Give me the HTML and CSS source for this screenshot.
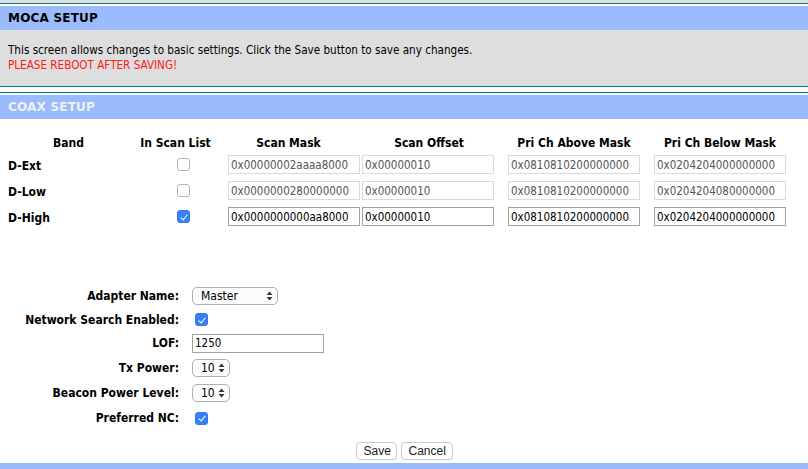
FILE: index.html
```html
<!DOCTYPE html>
<html>
<head>
<meta charset="utf-8">
<title>MoCA Setup</title>
<link rel="stylesheet" href="styles.css">
</head>
<body>
<div class="prev-strip"></div>
<section class="moca">
  <h2 class="bar">MOCA SETUP</h2>
  <div class="info">
    <p>This screen allows changes to basic settings. Click the Save button to save any changes.</p>
    <p class="warn">PLEASE REBOOT AFTER SAVING!</p>
  </div>
</section>
<section class="coax">
  <h2 class="bar bar-light">COAX SETUP</h2>
  <div class="bandgrid">
    <div class="hd">Band</div>
    <div class="hd hd-scan">In Scan List</div>
    <div class="hd hd-mask">Scan Mask</div>
    <div class="hd hd-off">Scan Offset</div>
    <div class="hd">Pri Ch Above Mask</div>
    <div class="hd">Pri Ch Below Mask</div>

    <div class="band">D-Ext</div>
    <div class="cbcell"><input type="checkbox" class="cb" disabled></div>
    <div class="c-mask"><input class="txt" type="text" value="0x00000002aaaa8000" disabled></div>
    <div class="c-off"><input class="txt" type="text" value="0x00000010" disabled></div>
    <div class="c-pri"><input class="txt" type="text" value="0x0810810200000000" disabled></div>
    <div class="c-pri"><input class="txt" type="text" value="0x0204204000000000" disabled></div>

    <div class="band">D-Low</div>
    <div class="cbcell"><input type="checkbox" class="cb" disabled></div>
    <div class="c-mask"><input class="txt" type="text" value="0x0000000280000000" disabled></div>
    <div class="c-off"><input class="txt" type="text" value="0x00000010" disabled></div>
    <div class="c-pri"><input class="txt" type="text" value="0x0810810200000000" disabled></div>
    <div class="c-pri"><input class="txt" type="text" value="0x0204204080000000" disabled></div>

    <div class="band">D-High</div>
    <div class="cbcell"><input type="checkbox" class="cb" checked></div>
    <div class="c-mask"><input class="txt txt-on" type="text" value="0x0000000000aa8000"></div>
    <div class="c-off"><input class="txt txt-on" type="text" value="0x00000010"></div>
    <div class="c-pri"><input class="txt txt-on" type="text" value="0x0810810200000000"></div>
    <div class="c-pri"><input class="txt txt-on" type="text" value="0x0204204000000000"></div>
  </div>

  <div class="form">
    <label class="lbl">Adapter Name:</label>
    <div class="ctl">
      <span class="sel sel-wide">
        <select><option>Master</option><option>Slave</option></select>
        <svg class="arr" width="7" height="10" viewBox="0 0 7 10"><path d="M3.5 0.5 L6.5 4 L0.5 4 Z M0.5 6 L6.5 6 L3.5 9.5 Z" fill="#333"/></svg>
      </span>
    </div>

    <label class="lbl">Network Search Enabled:</label>
    <div class="ctl"><input type="checkbox" class="cb cb-form" checked></div>

    <label class="lbl">LOF:</label>
    <div class="ctl"><input class="txt txt-on txt-lof" type="text" value="1250"></div>

    <label class="lbl">Tx Power:</label>
    <div class="ctl">
      <span class="sel sel-num">
        <select><option>10</option></select>
        <svg class="arr" width="7" height="10" viewBox="0 0 7 10"><path d="M3.5 0.5 L6.5 4 L0.5 4 Z M0.5 6 L6.5 6 L3.5 9.5 Z" fill="#333"/></svg>
      </span>
    </div>

    <label class="lbl">Beacon Power Level:</label>
    <div class="ctl">
      <span class="sel sel-num">
        <select><option>10</option></select>
        <svg class="arr" width="7" height="10" viewBox="0 0 7 10"><path d="M3.5 0.5 L6.5 4 L0.5 4 Z M0.5 6 L6.5 6 L3.5 9.5 Z" fill="#333"/></svg>
      </span>
    </div>

    <label class="lbl">Preferred NC:</label>
    <div class="ctl"><input type="checkbox" class="cb cb-form" checked></div>
  </div>

  <div class="actions">
    <button class="btn btn-save" type="button">Save</button>
    <button class="btn btn-cancel" type="button">Cancel</button>
  </div>
</section>
<div class="bar bottom-bar"></div>
</body>
</html>
```

FILE: styles.css
```css
* { box-sizing: border-box; }

html, body {
  margin: 0;
  padding: 0;
  background: #ffffff;
}

body {
  font-family: "DejaVu Sans Condensed", "DejaVu Sans", sans-serif;
  font-size: 12px;
  color: #000;
  overflow: hidden;
}

.prev-strip {
  height: 4px;
  background: #dedede;
  border-bottom: 1px solid #008080;
}

.moca {
  padding-top: 2px;
}

.bar {
  margin: 0;
  height: 24px;
  background: #9cbbfc;
  font-family: "DejaVu Sans", sans-serif;
  font-weight: bold;
  font-size: 12px;
  letter-spacing: 0.2px;
  line-height: 25px;
  padding-left: 8px;
  color: #000;
}

.bar-light {
  color: #eef0f6;
}

.info {
  background: #dedede;
  border-bottom: 1px solid #008080;
  padding: 13px 8px 12px;
  height: 57px;
  font-size: 11.6px;
  line-height: 15px;
}

.info p {
  margin: 0;
}

.warn {
  color: #ff1a1a;
}

.coax {
  margin-top: 5px;
  border-top: 1px solid #008080;
  padding-top: 2px;
}

.bandgrid {
  display: grid;
  grid-template-columns: 121px 97px 136px 140px 144px 148px;
  row-gap: 7px;
  align-items: center;
  margin: 16px 0 0 8px;
}

.hd {
  font-weight: bold;
  text-align: center;
  line-height: 16px;
  margin-bottom: -3px;
  white-space: nowrap;
}

.hd-scan { padding-right: 4px; }
.hd-mask { padding-right: 11px; }
.hd-off { padding-right: 6px; }

.band {
  font-weight: bold;
  height: 19px;
  line-height: 19px;
  padding-top: 2px;
}

.cbcell {
  height: 19px;
  display: flex;
  align-items: center;
  padding-left: 48px;
}

.c-mask { padding-left: 2px; height: 19px; }
.c-off { height: 19px; }
.c-pri { display: flex; justify-content: center; height: 19px; }

.txt {
  display: block;
  width: 132px;
  height: 19px;
  margin: 0;
  padding: 0 2px;
  border: 1px solid #dadada;
  border-radius: 0;
  background: #fff;
  color: #555;
  font-family: "DejaVu Sans Condensed", "DejaVu Sans", sans-serif;
  font-size: 11.5px;
  outline: none;
}

.txt-on {
  border-color: #a2a2a2;
  color: #000;
}

.txt:disabled {
  -webkit-text-fill-color: #555;
  opacity: 1;
}

.cb {
  -webkit-appearance: none;
  appearance: none;
  width: 13px;
  height: 13px;
  margin: 0;
  border: 1px solid #b4b4b4;
  border-radius: 3px;
  background: #fff;
  position: relative;
}

.cb:checked {
  background: #3880f5;
  border-color: #3277ef;
}

.cb:checked::after {
  content: "";
  position: absolute;
  left: 3.5px;
  top: 1.5px;
  width: 3px;
  height: 6px;
  border: solid #fff;
  border-width: 0 1.6px 1.6px 0;
  transform: rotate(40deg);
}

.form {
  display: grid;
  grid-template-columns: 179px auto;
  grid-template-rows: 24px 23px 24px 25px 25px 26px;
  column-gap: 13px;
  align-items: center;
  margin-top: 58px;
}

.lbl {
  font-weight: bold;
  text-align: right;
  white-space: nowrap;
}

.ctl {
  display: flex;
  align-items: center;
}

.cb-form {
  margin-left: 3px;
}

.txt-lof {
  width: 132px;
}

.sel {
  position: relative;
  display: inline-block;
}

.sel select {
  -webkit-appearance: none;
  appearance: none;
  display: block;
  height: 18px;
  margin: 0;
  padding: 0 0 0 8px;
  border: 1px solid #b0b0b0;
  border-radius: 5px;
  background: #fcfcfc;
  color: #000;
  font-family: "DejaVu Sans Condensed", "DejaVu Sans", sans-serif;
  font-size: 12px;
  line-height: 16px;
  outline: none;
}

.sel-wide select { width: 86px; }
.sel-num select { width: 38px; }

.arr {
  position: absolute;
  right: 5px;
  top: 4px;
  pointer-events: none;
}

.actions {
  display: flex;
  justify-content: center;
  gap: 4px;
  margin-top: 11px;
  padding-left: 0;
}

.btn {
  height: 18px;
  margin: 0;
  padding: 0 7px;
  border: 1px solid #c9c9c9;
  border-radius: 4px;
  background: #fff;
  color: #222;
  font-family: "Liberation Sans", Arial, sans-serif;
  font-size: 12px;
  line-height: 16px;
}

.btn-save { width: 41px; }
.btn-cancel { width: 52px; }

.bottom-bar {
  margin-top: 3px;
}
```
